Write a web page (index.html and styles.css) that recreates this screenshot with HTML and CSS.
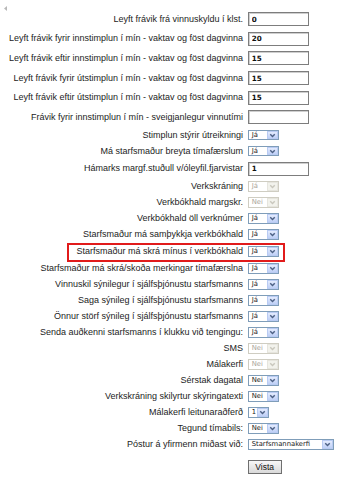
FILE: index.html
```html
<!DOCTYPE html>
<html lang="is">
<head>
<meta charset="utf-8">
<title>Stillingar</title>
<link rel="stylesheet" href="styles.css">
</head>
<body>
<div class="page">
  <div class="collapse"><svg width="3" height="5" viewBox="0 0 3 5"><path d="M3 0 L0 2.5 L3 5 Z" fill="#b8b8b8"/></svg></div>
  <div class="form">
    <div class="row in"><span class="lbl">Leyft frávik frá vinnuskyldu í klst.</span><input class="txt" type="text" value="0"></div>
    <div class="row in"><span class="lbl">Leyft frávik fyrir innstimplun í mín - vaktav og föst dagvinna</span><input class="txt" type="text" value="20"></div>
    <div class="row in"><span class="lbl">Leyft frávik eftir innstimplun í mín - vaktav og föst dagvinna</span><input class="txt" type="text" value="15"></div>
    <div class="row in"><span class="lbl">Leyft frávik fyrir útstimplun í mín - vaktav og föst dagvinna</span><input class="txt" type="text" value="15"></div>
    <div class="row in"><span class="lbl">Leyft frávik eftir útstimplun í mín - vaktav og föst dagvinna</span><input class="txt" type="text" value="15"></div>
    <div class="row in"><span class="lbl">Frávik fyrir innstimplun í mín - sveigjanlegur vinnutími</span><input class="txt" type="text" value=""></div>
    <div class="row sl"><span class="lbl">Stimplun stýrir útreikningi</span><span class="sel"><span class="val">Já</span><span class="btn"><svg viewBox="0 0 8 6"><path d="M1.3 1.5 L4 4.2 L6.7 1.5"/></svg></span></span></div>
    <div class="row sl"><span class="lbl">Má starfsmaður breyta tímafærslum</span><span class="sel"><span class="val">Já</span><span class="btn"><svg viewBox="0 0 8 6"><path d="M1.3 1.5 L4 4.2 L6.7 1.5"/></svg></span></span></div>
    <div class="row in"><span class="lbl">Hámarks margf.stuðull v/óleyfil.fjarvistar</span><input class="txt" type="text" value="1"></div>
    <div class="row sl"><span class="lbl">Verkskráning</span><span class="sel dis"><span class="val">Já</span><span class="btn"><svg viewBox="0 0 8 6"><path d="M1.3 1.5 L4 4.2 L6.7 1.5"/></svg></span></span></div>
    <div class="row sl"><span class="lbl">Verkbókhald margskr.</span><span class="sel dis"><span class="val">Nei</span><span class="btn"><svg viewBox="0 0 8 6"><path d="M1.3 1.5 L4 4.2 L6.7 1.5"/></svg></span></span></div>
    <div class="row sl"><span class="lbl">Verkbókhald öll verknúmer</span><span class="sel"><span class="val">Já</span><span class="btn"><svg viewBox="0 0 8 6"><path d="M1.3 1.5 L4 4.2 L6.7 1.5"/></svg></span></span></div>
    <div class="row sl"><span class="lbl">Starfsmaður má samþykkja verkbókhald</span><span class="sel"><span class="val">Já</span><span class="btn"><svg viewBox="0 0 8 6"><path d="M1.3 1.5 L4 4.2 L6.7 1.5"/></svg></span></span></div>
    <div class="row hl"><span class="lbl">Starfsmaður má skrá mínus í verkbókhald</span><span class="sel"><span class="val">Já</span><span class="btn"><svg viewBox="0 0 8 6"><path d="M1.3 1.5 L4 4.2 L6.7 1.5"/></svg></span></span></div>
    <div class="row sl"><span class="lbl">Starfsmaður má skrá/skoða merkingar tímafærslna</span><span class="sel"><span class="val">Já</span><span class="btn"><svg viewBox="0 0 8 6"><path d="M1.3 1.5 L4 4.2 L6.7 1.5"/></svg></span></span></div>
    <div class="row sl"><span class="lbl">Vinnuskil sýnilegur í sjálfsþjónustu starfsmanns</span><span class="sel"><span class="val">Já</span><span class="btn"><svg viewBox="0 0 8 6"><path d="M1.3 1.5 L4 4.2 L6.7 1.5"/></svg></span></span></div>
    <div class="row sl"><span class="lbl">Saga sýnileg í sjálfsþjónustu starfsmanns</span><span class="sel"><span class="val">Já</span><span class="btn"><svg viewBox="0 0 8 6"><path d="M1.3 1.5 L4 4.2 L6.7 1.5"/></svg></span></span></div>
    <div class="row sl"><span class="lbl">Önnur störf sýnileg í sjálfsþjónustu starfsmanns</span><span class="sel"><span class="val">Já</span><span class="btn"><svg viewBox="0 0 8 6"><path d="M1.3 1.5 L4 4.2 L6.7 1.5"/></svg></span></span></div>
    <div class="row sl"><span class="lbl">Senda auðkenni starfsmanns í klukku við tengingu:</span><span class="sel"><span class="val">Já</span><span class="btn"><svg viewBox="0 0 8 6"><path d="M1.3 1.5 L4 4.2 L6.7 1.5"/></svg></span></span></div>
    <div class="row sl"><span class="lbl">SMS</span><span class="sel dis"><span class="val">Nei</span><span class="btn"><svg viewBox="0 0 8 6"><path d="M1.3 1.5 L4 4.2 L6.7 1.5"/></svg></span></span></div>
    <div class="row sl"><span class="lbl">Málakerfi</span><span class="sel dis"><span class="val">Nei</span><span class="btn"><svg viewBox="0 0 8 6"><path d="M1.3 1.5 L4 4.2 L6.7 1.5"/></svg></span></span></div>
    <div class="row sl"><span class="lbl">Sérstak dagatal</span><span class="sel"><span class="val">Nei</span><span class="btn"><svg viewBox="0 0 8 6"><path d="M1.3 1.5 L4 4.2 L6.7 1.5"/></svg></span></span></div>
    <div class="row sl"><span class="lbl">Verkskráning skilyrtur skýringatexti</span><span class="sel"><span class="val">Nei</span><span class="btn"><svg viewBox="0 0 8 6"><path d="M1.3 1.5 L4 4.2 L6.7 1.5"/></svg></span></span></div>
    <div class="row sl"><span class="lbl">Málakerfi leitunaraðferð</span><span class="sel narrow"><span class="val">1</span><span class="btn"><svg viewBox="0 0 8 6"><path d="M1.3 1.5 L4 4.2 L6.7 1.5"/></svg></span></span></div>
    <div class="row sl"><span class="lbl">Tegund tímabils:</span><span class="sel"><span class="val">Nei</span><span class="btn"><svg viewBox="0 0 8 6"><path d="M1.3 1.5 L4 4.2 L6.7 1.5"/></svg></span></span></div>
    <div class="row sl"><span class="lbl">Póstur á yfirmenn miðast við:</span><span class="sel wide"><span class="val">Starfsmannakerfi</span><span class="btn"><svg viewBox="0 0 8 6"><path d="M1.3 1.5 L4 4.2 L6.7 1.5"/></svg></span></span></div>
    <div class="row act"><span class="lbl"></span><button class="save" type="button">Vista</button></div>
  </div>
</div>
</body>
</html>
```

FILE: styles.css
```css
html, body {
  margin: 0;
  padding: 0;
  background: #ffffff;
}

.page {
  width: 345px;
  font-family: "Liberation Sans", Arial, sans-serif;
  color: #1c1c1c;
}

.collapse {
  height: 9.5px;
  box-sizing: border-box;
  padding: 6px 0 0 4px;
}

.collapse svg {
  display: block;
}

.form {
  display: flex;
  flex-direction: column;
}

.row {
  display: flex;
  align-items: center;
  flex: none;
}

.row.in { height: 19.6px; }
.row.sl { height: 16px; }
.row.hl { height: 18px; position: relative; }
.row.act { height: 21px; align-items: flex-end; }

.row.hl::after {
  content: "";
  position: absolute;
  left: 67px;
  top: 0.3px;
  width: 218px;
  height: 19.5px;
  border: 2px solid #e11b1b;
  box-sizing: border-box;
  pointer-events: none;
}

.lbl {
  flex: none;
  width: 243px;
  text-align: right;
  white-space: nowrap;
  font-size: 9px;
  line-height: 11px;
  margin-right: 4.7px;
}

.txt {
  width: 61px;
  height: 14px;
  box-sizing: border-box;
  margin: 0;
  padding: 0 0 0 3px;
  border: 1px solid #7d7d7d;
  box-shadow: inset 1px 1px 0 #cfcfcf;
  font-family: "DejaVu Sans", Verdana, sans-serif;
  font-weight: bold;
  font-size: 7.2px;
  color: #111;
  background: #fff;
  outline: none;
}

.sel {
  display: inline-flex;
  align-items: stretch;
  width: 31px;
  height: 10.5px;
  box-sizing: border-box;
  border: 1px solid #7f9db9;
  background: #fff;
}

.sel.narrow { width: 21px; }
.sel.wide { width: 86px; }

.sel .val {
  flex: 1;
  font-family: "DejaVu Sans", Verdana, sans-serif;
  font-size: 6.8px;
  line-height: 8.5px;
  padding-left: 3px;
  color: #1a1a1a;
  white-space: nowrap;
  overflow: hidden;
}

.sel .btn {
  flex: none;
  width: 11px;
  box-sizing: border-box;
  border: 1px solid #b9cbf3;
  background: linear-gradient(#e3ebfe, #bfd0f6);
  display: flex;
  align-items: center;
  justify-content: center;
}

.sel .btn svg {
  width: 7px;
  height: 5px;
  display: block;
}

.sel .btn path {
  fill: none;
  stroke: #4d6185;
  stroke-width: 1.7;
}

.sel.dis {
  border-color: #cfcdc2;
}

.sel.dis .val {
  color: #aaa69a;
}

.sel.dis .btn {
  border-color: #e6e5de;
  background: #f2f2ec;
}

.sel.dis .btn path {
  stroke: #c9c7bd;
}

.save {
  width: 34px;
  height: 14px;
  margin: 0;
  padding: 0;
  box-sizing: border-box;
  border: 1px solid #6f6f6f;
  background: linear-gradient(#f7f7f7, #d9d9d9);
  font-family: "Liberation Sans", Arial, sans-serif;
  font-size: 8.5px;
  color: #111;
  line-height: 12px;
}
```
